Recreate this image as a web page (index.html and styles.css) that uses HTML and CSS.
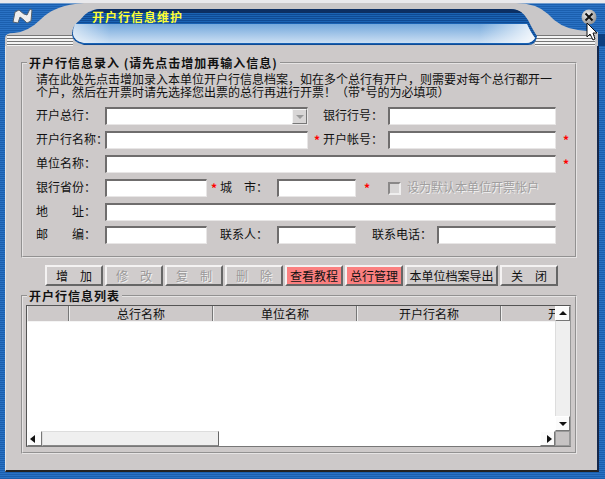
FILE: index.html
```html
<!DOCTYPE html>
<html lang="zh-CN">
<head>
    <meta charset="UTF-8">
    <title>开户行信息维护</title>
    <link rel="stylesheet" href="styles.css">
</head>
<body>
    <div class="window">
        <div class="titlebar">
            <svg class="chrome" width="605" height="46" viewBox="0 0 605 46">
                <defs>
                    <pattern id="blueLines" width="4" height="2" patternUnits="userSpaceOnUse">
                        <rect width="4" height="1" fill="#1b5fae"/>
                        <rect y="1" width="4" height="1" fill="#2a72c4"/>
                    </pattern>
                    <pattern id="darkLines" width="4" height="2" patternUnits="userSpaceOnUse">
                        <rect width="4" height="1" fill="#0f4a94"/>
                        <rect y="1" width="4" height="1" fill="#1a63b4"/>
                    </pattern>
                    <pattern id="greyLines" width="4" height="3" patternUnits="userSpaceOnUse">
                        <rect width="4" height="3" fill="#f4f4f4"/>
                        <rect y="2" width="4" height="1" fill="#777"/>
                    </pattern>
                    <linearGradient id="glass" x1="0" y1="0" x2="0" y2="1">
                        <stop offset="0" stop-color="#74a8dc"/>
                        <stop offset="1" stop-color="#cbdff3"/>
                    </linearGradient>
                    <linearGradient id="sheen" x1="0" y1="0" x2="1" y2="0">
                        <stop offset="0" stop-color="#fff" stop-opacity="0.6"/>
                        <stop offset="0.08" stop-color="#fff" stop-opacity="0"/>
                        <stop offset="0.88" stop-color="#fff" stop-opacity="0"/>
                        <stop offset="1" stop-color="#fff" stop-opacity="0.85"/>
                    </linearGradient>
                    <radialGradient id="knob" cx="0.4" cy="0.35" r="0.7">
                        <stop offset="0" stop-color="#f4f4f4"/>
                        <stop offset="1" stop-color="#8a8a8a"/>
                    </radialGradient>
                </defs>
                <rect width="605" height="46" fill="url(#blueLines)"/>
                <rect width="605" height="3" fill="#e9e9ec"/>
                <rect x="0" y="3" width="605" height="1" fill="#6f9ccf"/>
                <rect x="598" y="34" width="7" height="12" fill="#0d3f80"/>
                <path d="M5 46 L5 38 Q5 33 14 33 Q28 32 40 20 Q54 5 84 3 L516 3 Q536 3 548 14 Q560 28 578 30 L598 32 L598 46 Z" fill="#c9c7c8"/>
                <rect x="80" y="0" width="440" height="3" fill="#e9e9ec"/>
                <rect x="7" y="35" width="66" height="11" fill="url(#greyLines)"/>
                <rect x="535" y="35" width="60" height="11" fill="url(#greyLines)"/>
                <path d="M100 9 L510 9 Q522 9 528 20 Q534 32 537 36 Q536 45 528 45 L84 45 Q72 42 72 34 Q72 26 80 20 Q88 9 100 9 Z" fill="url(#darkLines)"/>
                <path d="M100 9 L510 9 Q518 9 522 13 L90 13 Q94 9 100 9 Z" fill="#0c2f63"/>
                <path d="M75 24 L527 24 Q531 33 535 38 Q532 43 526 43 L84 43 Q74 41 73 34 Q73 28 75 24 Z" fill="url(#glass)"/>
                <path d="M75 24 L527 24 Q531 33 535 38 Q532 43 526 43 L84 43 Q74 41 73 34 Q73 28 75 24 Z" fill="url(#sheen)"/>
                <path d="M13 22 L15 12 L19 10 Q24 15 27 15 L30 9 L32 10 L31 21 L27 23 Q22 18 20 17 L18 23 Z" fill="#eeeeee" stroke="#56616c" stroke-width="1"/>
                <circle cx="589" cy="17" r="7.5" fill="url(#knob)"/>
                <path d="M585.5 13.5 L592.5 20.5 M592.5 13.5 L585.5 20.5" stroke="#111" stroke-width="2"/>
                <path d="M587 23 L587 37 L590 34 L593 40 L595 39 L593 33 L597 33 Z" fill="#fff" stroke="#111" stroke-width="1"/>
            </svg>
            <span class="title">开户行信息维护</span>
        </div>

        <div class="panel">
            <fieldset class="group entry">
                <legend>开户行信息录入 (请先点击增加再输入信息)</legend>
                <p class="hint">请在此处先点击增加录入本单位开户行信息档案，如在多个总行有开户，则需要对每个总行都开一<br>个户，然后在开票时请先选择您出票的总行再进行开票！（带*号的为必填项）</p>
                <div class="form">
                    <div class="row">
                        <label class="lbl">开户总行：</label>
                        <div class="field w-wide combo"><span class="combo-btn"></span></div>
                        <label class="lbl lbl-b">银行行号：</label>
                        <div class="field w-acct"></div>
                    </div>
                    <div class="row">
                        <label class="lbl">开户行名称：</label>
                        <div class="field w-wide"></div>
                        <span class="req req-b">*</span>
                        <label class="lbl lbl-c">开户帐号：</label>
                        <div class="field w-acct"></div>
                        <span class="req req-end">*</span>
                    </div>
                    <div class="row">
                        <label class="lbl">单位名称：</label>
                        <div class="field w-full"></div>
                        <span class="req req-end">*</span>
                    </div>
                    <div class="row">
                        <label class="lbl">银行省份：</label>
                        <div class="field w-short"></div>
                        <span class="req req-a">*</span>
                        <label class="lbl lbl-city">城　市：</label>
                        <div class="field w-mid"></div>
                        <span class="req req-city">*</span>
                        <span class="check"></span>
                        <span class="check-text">设为默认本单位开票帐户</span>
                    </div>
                    <div class="row">
                        <label class="lbl">地　　址：</label>
                        <div class="field w-full"></div>
                    </div>
                    <div class="row row-last">
                        <label class="lbl">邮　　编：</label>
                        <div class="field w-short"></div>
                        <label class="lbl lbl-contact">联系人：</label>
                        <div class="field w-mid"></div>
                        <label class="lbl lbl-phone">联系电话：</label>
                        <div class="field w-phone"></div>
                    </div>
                </div>
            </fieldset>

            <div class="buttons">
                <button class="btn">增　加</button>
                <button class="btn off">修　改</button>
                <button class="btn off">复　制</button>
                <button class="btn off">删　除</button>
                <button class="btn red">查看教程</button>
                <button class="btn red">总行管理</button>
                <button class="btn long">本单位档案导出</button>
                <button class="btn">关　闭</button>
            </div>

            <fieldset class="group list-group">
                <legend>开户行信息列表</legend>
                <div class="list">
                    <div class="grid-area">
                        <div class="grid-head">
                            <span class="col col-0"></span>
                            <span class="col col-n">总行名称</span>
                            <span class="col col-n">单位名称</span>
                            <span class="col col-n">开户行名称</span>
                            <span class="col col-cut">开户帐号</span>
                        </div>
                    </div>
                    <div class="vbar">
                        <span class="sb-btn"><i class="arrow up"></i></span>
                        <span class="sb-track"></span>
                        <span class="sb-btn"><i class="arrow down"></i></span>
                    </div>
                    <div class="hbar">
                        <span class="sb-btn"><i class="arrow left"></i></span>
                        <span class="sb-thumb"></span>
                        <span class="sb-rest"></span>
                        <span class="sb-btn"><i class="arrow right"></i></span>
                    </div>
                    <div class="corner"></div>
                </div>
            </fieldset>
        </div>
    </div>
</body>
</html>
```

FILE: styles.css
```css
body {
    margin: 0;
    font-family: "Noto Sans CJK SC", "Liberation Sans", sans-serif;
    font-size: 12px;
    color: #111;
}

.window {
    position: relative;
    width: 605px;
    height: 479px;
    overflow: hidden;
    background: repeating-linear-gradient(#1b5fae 0, #1b5fae 1px, #2a72c4 1px, #2a72c4 2px);
}

.titlebar {
    position: relative;
    height: 46px;
}

.chrome {
    display: block;
}

.title {
    position: absolute;
    left: 92px;
    top: 9px;
    color: #ffff33;
    font-weight: bold;
    letter-spacing: 1px;
    line-height: 16px;
}

.panel {
    box-sizing: border-box;
    width: 594px;
    height: 426px;
    margin-left: 5px;
    padding: 10px 0 0 15px;
    background-color: #cdc9c9;
    border-left: 1px solid #e4e4e4;
    border-right: 2px solid #16284a;
    border-bottom: 2px solid #222;
}

.group {
    box-sizing: border-box;
    width: 556px;
    min-width: 0;
    margin: 0;
    padding: 0 0 0 13px;
    border: 2px groove #e6e4e4;
}

.group legend {
    margin-left: -9px;
    padding: 0 2px;
    font-weight: bold;
    letter-spacing: 1px;
    line-height: 14px;
}

.entry {
    height: 202px;
}

.hint {
    margin: 2px 0 9px;
    line-height: 13px;
    white-space: nowrap;
}

.form {
    display: flex;
    flex-direction: column;
    gap: 6px;
}

.row {
    display: flex;
    align-items: center;
    height: 18px;
}

.row-last {
    margin-top: -1px;
}

.lbl {
    box-sizing: border-box;
    width: 69px;
    padding-bottom: 3px;
    flex: none;
    white-space: nowrap;
}

.lbl-b {
    width: 65px;
    margin-left: 15px;
}

.lbl-c {
    width: 65px;
}

.lbl-city {
    width: 57px;
}

.lbl-contact {
    width: 57px;
    margin-left: 13px;
}

.lbl-phone {
    width: 65px;
    margin-left: 16px;
}

.field {
    box-sizing: border-box;
    position: relative;
    height: 18px;
    flex: none;
    background: #fff;
    border-style: solid;
    border-width: 2px 1px 1px 2px;
    border-color: #6f6d6d #e8e6e6 #e8e6e6 #6f6d6d;
}

.w-wide { width: 203px; }
.w-acct { width: 168px; }
.w-full { width: 451px; }
.w-short { width: 102px; }
.w-mid { width: 79px; }
.w-phone { width: 119px; }

.combo-btn {
    position: absolute;
    top: 0;
    right: 0;
    width: 15px;
    height: 15px;
    box-sizing: border-box;
    background: #d8d6d6;
    border: 1px solid;
    border-color: #f4f4f4 #777 #777 #f4f4f4;
}

.combo-btn::after {
    content: "";
    position: absolute;
    left: 3px;
    top: 5px;
    border: 4px solid transparent;
    border-top: 4px solid #9a9a9a;
    border-bottom: 0;
}

.req {
    flex: none;
    color: #f00;
    font-weight: bold;
    line-height: 18px;
}

.req-a {
    width: 9px;
    margin-left: 4px;
}

.req-b {
    width: 7px;
    margin-left: 6px;
    margin-right: 2px;
}

.req-end {
    margin-left: 7px;
}

.req-city {
    width: 8px;
    margin-left: 8px;
    margin-right: 16px;
}

.check {
    box-sizing: border-box;
    width: 13px;
    height: 13px;
    flex: none;
    background: #d8d6d6;
    border: 2px solid;
    border-color: #8a8888 #efeeee #efeeee #8a8888;
}

.check-text {
    margin-left: 6px;
    padding-bottom: 3px;
    color: #a09e9e;
    text-shadow: 1px 1px 0 #f2f2f2;
    white-space: nowrap;
}

.buttons {
    display: flex;
    gap: 2px;
    margin: 7px 0 0 24px;
}

.btn {
    box-sizing: border-box;
    width: 58px;
    height: 21px;
    padding: 0 0 2px;
    font: inherit;
    color: #111;
    background: #d0cccc;
    border: 2px solid;
    border-color: #f4f2f2 #666 #666 #f4f2f2;
}

.off {
    color: #9a9898;
    text-shadow: 1px 1px 0 #f2f2f2;
}

.red {
    background: #fb8080;
}

.long {
    width: 93px;
}

.list-group {
    height: 165px;
    margin-top: 3px;
    padding: 2px 0 0 3px;
}

.list-group legend {
    margin-left: 1px;
}

.list {
    display: grid;
    box-sizing: border-box;
    grid-template-columns: 528px 15px;
    grid-template-rows: 125px 15px;
    width: 545px;
    height: 142px;
    background: #fff;
    border: 1px solid #555;
    border-bottom-color: #777;
    border-right-color: #999;
}

.grid-head {
    display: flex;
    height: 15px;
    overflow: hidden;
    background: #cdc9c9;
    border-bottom: 1px solid #f4f4f4;
}

.col {
    box-sizing: border-box;
    flex: none;
    line-height: 15px;
    text-align: center;
    white-space: nowrap;
    border-right: 1px solid #777;
    border-left: 1px solid #eee;
}

.col-0 { width: 42px; }
.col-n { width: 144px; }
.col-cut { width: 54px; border-right: 0; overflow: hidden; text-indent: 46px; text-align: left; }

.vbar {
    display: flex;
    flex-direction: column;
}

.hbar {
    display: flex;
}

.sb-btn {
    position: relative;
    display: block;
    box-sizing: border-box;
    width: 15px;
    height: 15px;
    flex: none;
    background: #fbfbfb;
    border: 1px solid;
    border-color: #fff #777 #777 #fff;
}

.sb-track {
    flex: 1;
    background: #efefef;
    border-left: 1px solid #ddd;
}

.sb-thumb {
    box-sizing: border-box;
    width: 177px;
    flex: none;
    background: #efefef;
    border: 1px solid #ddd;
    border-right: 1px solid #666;
    border-bottom-color: #888;
}

.sb-rest {
    flex: 1;
    background: #fff;
}

.corner {
    box-sizing: border-box;
    background: #c6c3c3;
    border: 1px solid #999;
}

.arrow {
    position: absolute;
    left: 3px;
    top: 3px;
    width: 0;
    height: 0;
    border: 4px solid transparent;
}

.arrow.up { top: 1px; border-bottom: 4px solid #111; border-top: 0; margin-top: 3px; }
.arrow.down { top: 5px; border-top: 4px solid #111; border-bottom: 0; }
.arrow.left { left: 2px; border-right: 5px solid #111; border-left: 0; }
.arrow.right { left: 6px; border-left: 5px solid #111; border-right: 0; }
```
